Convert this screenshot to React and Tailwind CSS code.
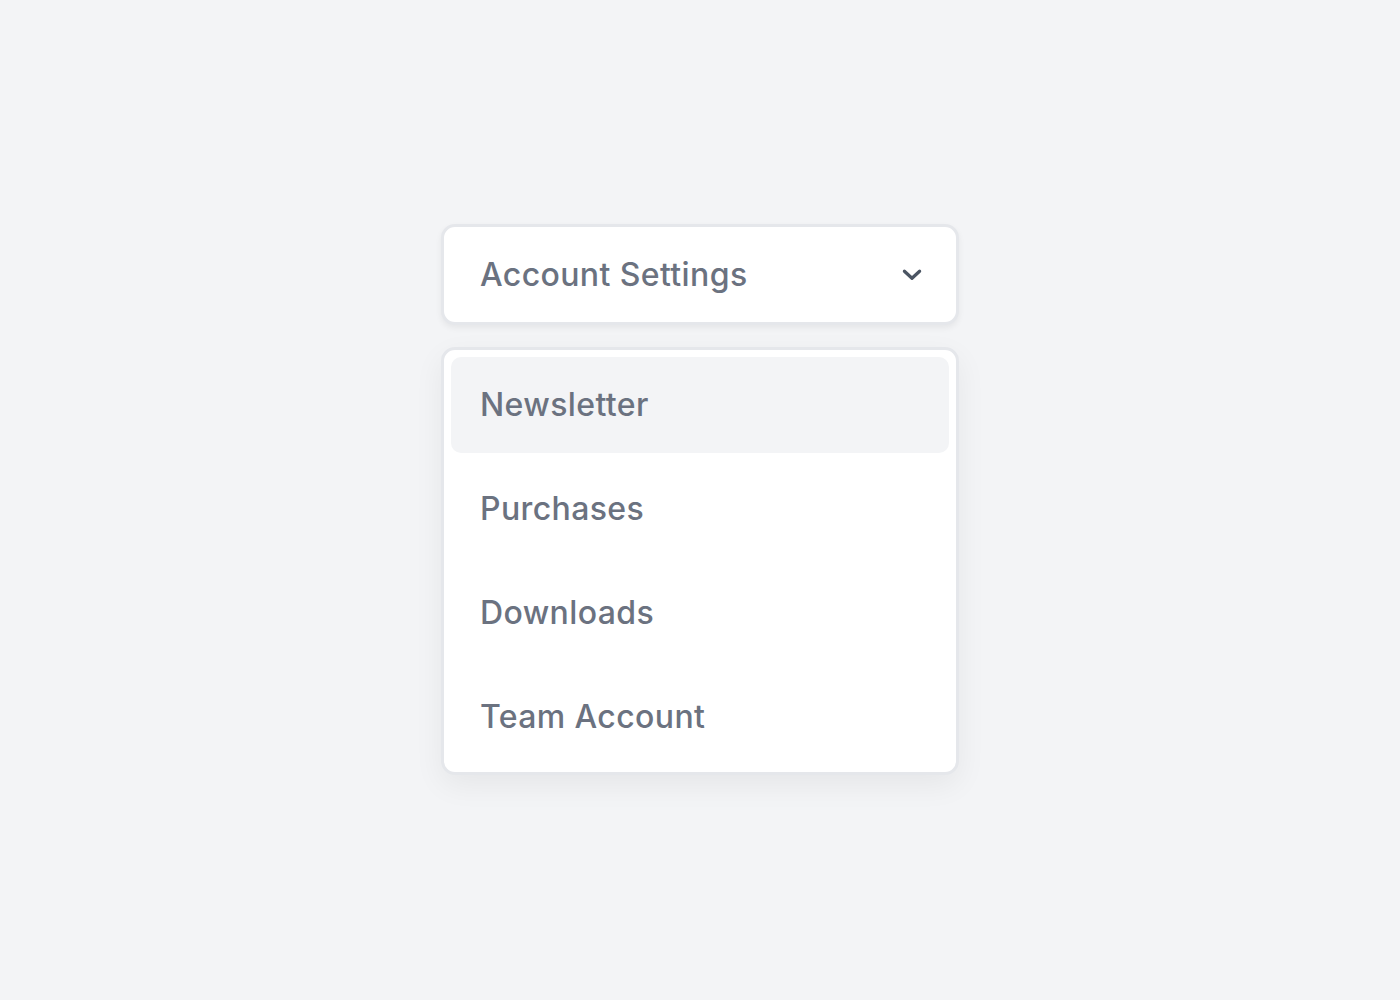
export default function App() {
  const items = ["Newsletter", "Purchases", "Downloads", "Team Account"];
  return (
    <div className="min-h-screen bg-[#f3f4f6] pt-[224px] flex justify-center" style={{ fontFamily: "Inter, sans-serif" }}>
      <div className="w-[518px]">
        <button className="w-full h-[101px] bg-white border-[3px] border-[#e5e7eb] rounded-[14px] shadow-[0_3px_6px_rgba(0,0,0,0.06)] flex items-center justify-between pl-[36px] pr-[31px] text-[32px] tracking-[0.012em] font-[450] text-[#6b7280]">
          <span>Account Settings</span>
          <svg width="26" height="26" viewBox="0 0 24 24" fill="none" stroke="#4b5563" strokeWidth="3" strokeLinecap="round" strokeLinejoin="round">
            <path d="M5 8.5l7 6.5 7-6.5" />
          </svg>
        </button>
        <div className="mt-[22px] bg-white border-[3px] border-[#e5e7eb] rounded-[14px] shadow-[0_10px_30px_rgba(0,0,0,0.06)] p-[7px] flex flex-col gap-[8px]">
          {items.map((t, i) => (
            <div key={t} className={`h-[96px] rounded-[10px] flex items-center px-[29px] text-[32px] tracking-[0.012em] font-[450] text-[#6b7280] ${i === 0 ? "bg-[#f3f4f6]" : ""}`}>
              {t}
            </div>
          ))}
        </div>
      </div>
    </div>
  );
}
